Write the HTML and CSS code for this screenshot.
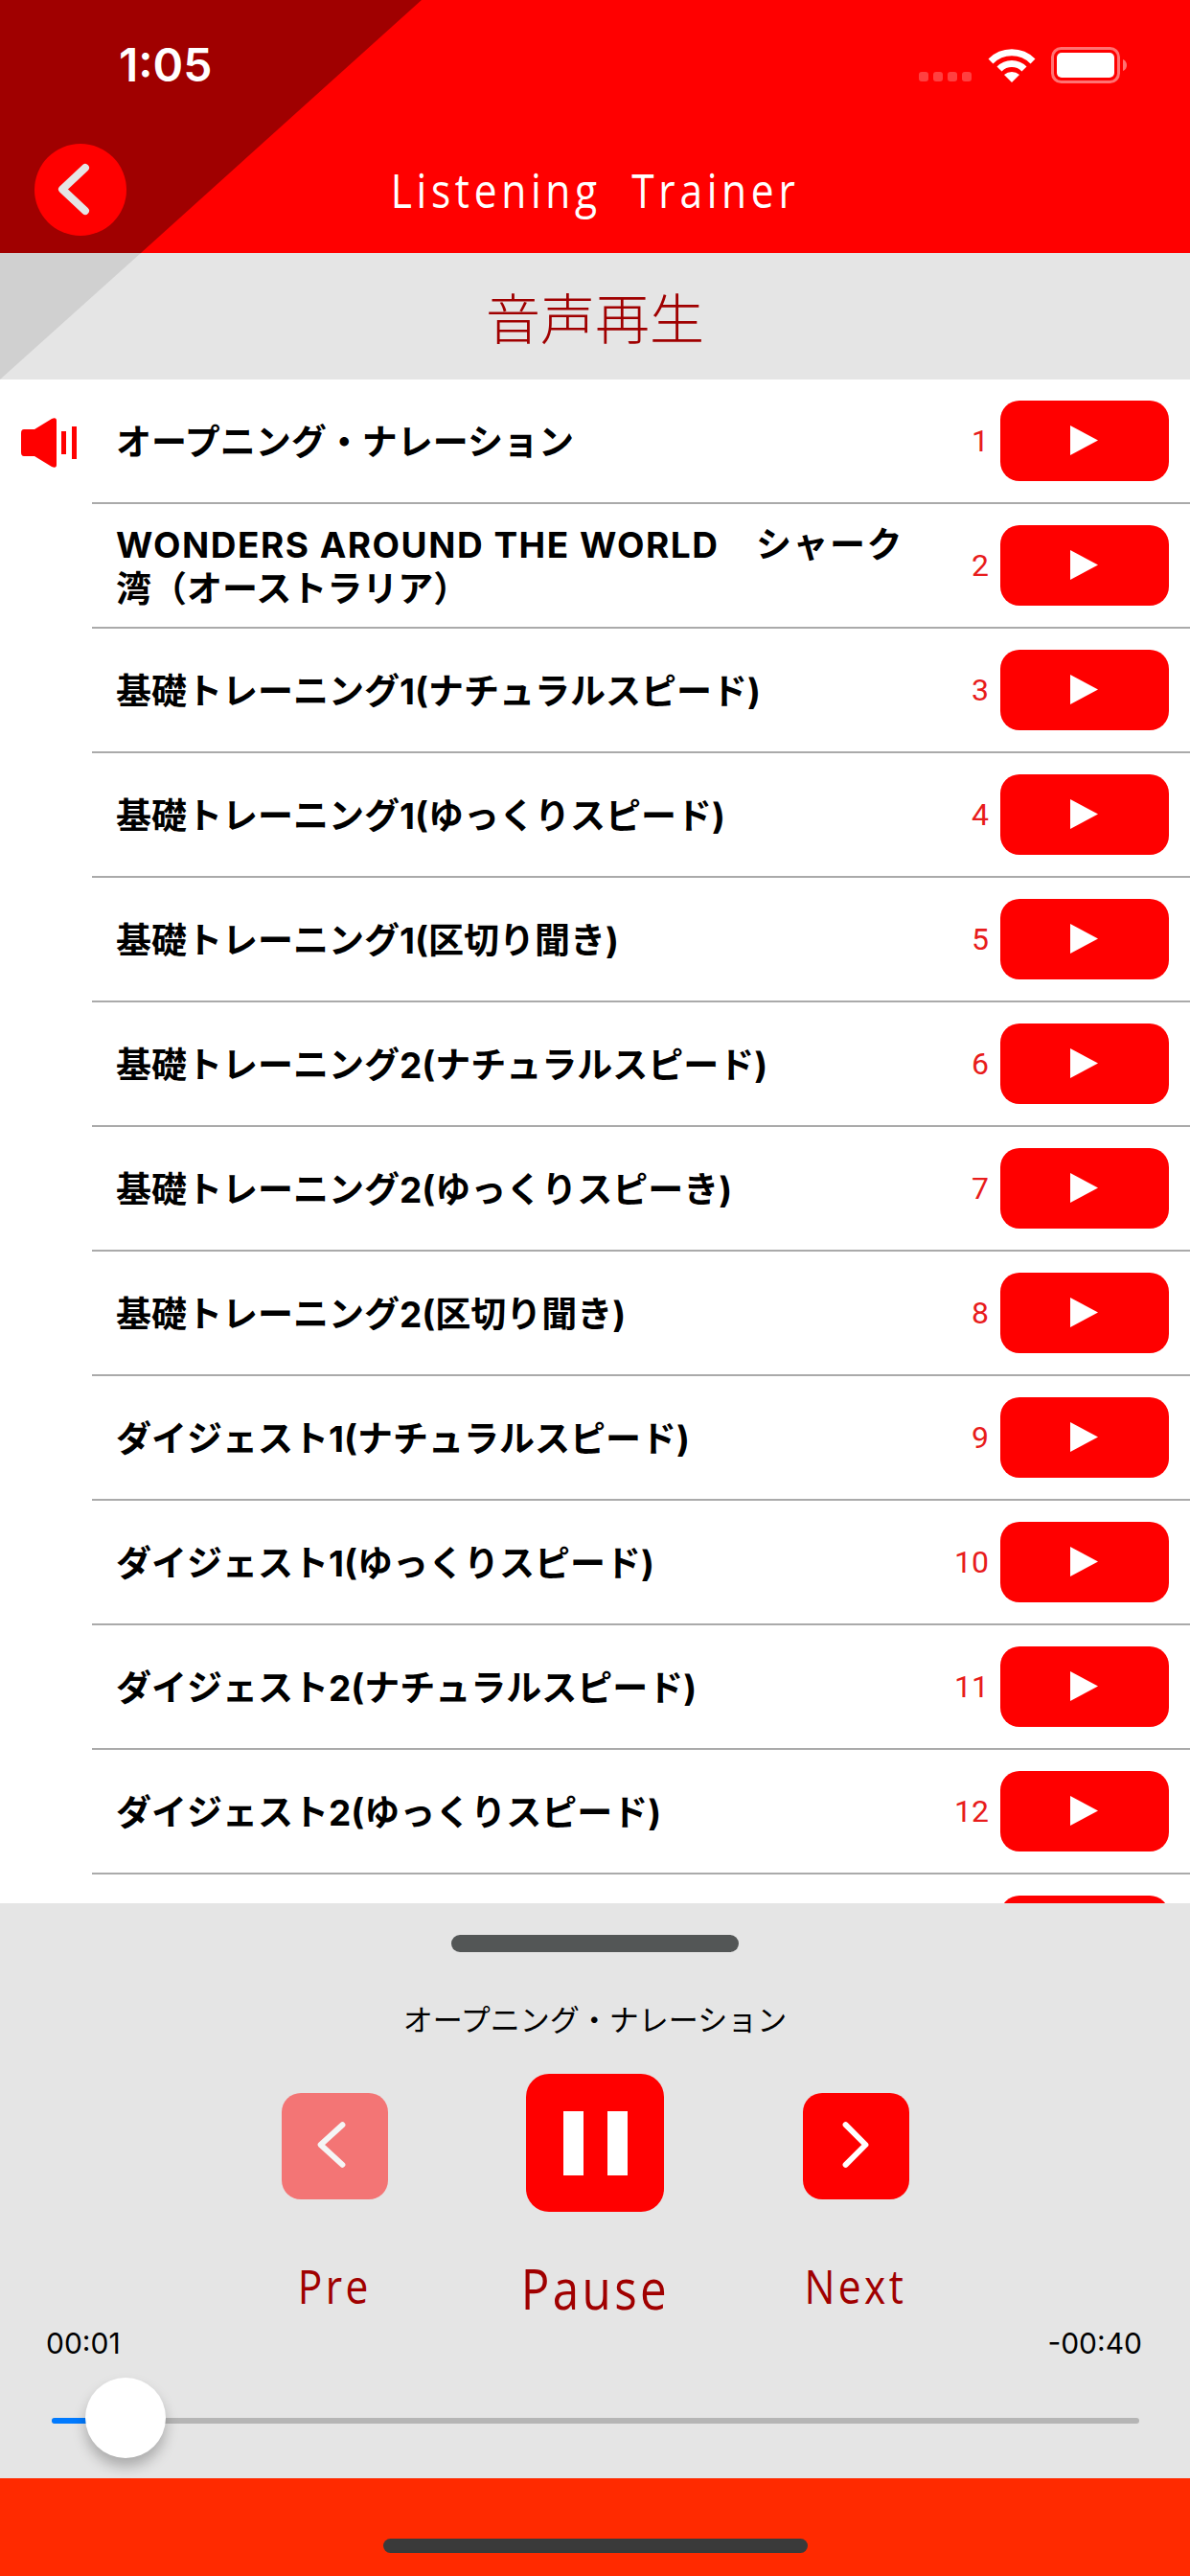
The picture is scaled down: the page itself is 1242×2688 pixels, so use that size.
FILE: index.html
```html
<!DOCTYPE html>
<html lang="ja">
<head>
  <meta charset="UTF-8" />
  <meta name="viewport" content="width=device-width, initial-scale=1.0"/>
  <title>Listening Trainer</title>
  <link rel="stylesheet" href="styles.css">
</head>
<body>
  <div class="screen">

    <header class="app-header">
      <div class="status-bar">
        <span class="time">1:05</span>
        <div class="status-icons">
          <div class="signal"><i></i><i></i><i></i><i></i></div>
          <svg class="wifi" viewBox="0 0 50 36" width="50" height="36">
            <path d="M3 14 A31 31 0 0 1 47 14" fill="none" stroke="#fff" stroke-width="7"/>
            <path d="M12 22 A18 18 0 0 1 38 22" fill="none" stroke="#fff" stroke-width="7"/>
            <path d="M25 36 L17 28 A12 12 0 0 1 33 28 Z" fill="#fff"/>
          </svg>
          <svg class="battery" viewBox="0 0 80 38" width="80" height="38">
            <rect x="1.5" y="1.5" width="69" height="35" rx="9" fill="none" stroke="#fff" stroke-opacity="0.45" stroke-width="3"/>
            <rect x="6" y="6" width="60" height="26" rx="5" fill="#fff"/>
            <path d="M75 13 C78 14 79 17 79 19 C79 21 78 24 75 25 Z" fill="#fff" fill-opacity="0.45"/>
          </svg>
        </div>
      </div>
      <div class="nav-row">
        <button class="back-btn">
          <svg viewBox="0 0 96 96" width="96" height="96">
            <path d="M53 25 L29 47.500 L53 70" fill="none" stroke="#e5e5e5" stroke-width="8" stroke-linecap="round" stroke-linejoin="round"/>
          </svg>
        </button>
        <div class="app-title"><span>Listening&nbsp; Trainer</span></div>
      </div>
    </header>

    <div class="page-title">音声再生</div>

    <main class="track-list">
      <div class="track">
        <div class="gutter">
          <svg viewBox="0 0 60 52" width="60" height="52">
            <path d="M3 12 H14 L32 1 Q37 -1 37 3 V49 Q37 53 32 51 L14 40 H3 Q0 40 0 36 V16 Q0 12 3 12 Z" fill="#f00"/>
            <rect x="42" y="14" width="5" height="24" fill="#f00"/>
            <rect x="53" y="9" width="5" height="34" fill="#f00"/>
          </svg>
        </div>
        <div class="track-main">
          <div class="track-name">オープニング・ナレーション</div>
          <div class="track-num">1</div>
          <button class="play-btn"></button>
        </div>
      </div>
      <div class="track">
        <div class="gutter"></div>
        <div class="track-main">
          <div class="track-name">
            <div class="latin">WONDERS AROUND THE WORLD　シャーク</div>
            <div>湾（オーストラリア）</div>
          </div>
          <div class="track-num">2</div>
          <button class="play-btn"></button>
        </div>
      </div>
      <div class="track">
        <div class="gutter"></div>
        <div class="track-main">
          <div class="track-name">基礎トレーニング1(ナチュラルスピード)</div>
          <div class="track-num">3</div>
          <button class="play-btn"></button>
        </div>
      </div>
      <div class="track">
        <div class="gutter"></div>
        <div class="track-main">
          <div class="track-name">基礎トレーニング1(ゆっくりスピード)</div>
          <div class="track-num">4</div>
          <button class="play-btn"></button>
        </div>
      </div>
      <div class="track">
        <div class="gutter"></div>
        <div class="track-main">
          <div class="track-name">基礎トレーニング1(区切り聞き)</div>
          <div class="track-num">5</div>
          <button class="play-btn"></button>
        </div>
      </div>
      <div class="track">
        <div class="gutter"></div>
        <div class="track-main">
          <div class="track-name">基礎トレーニング2(ナチュラルスピード)</div>
          <div class="track-num">6</div>
          <button class="play-btn"></button>
        </div>
      </div>
      <div class="track">
        <div class="gutter"></div>
        <div class="track-main">
          <div class="track-name">基礎トレーニング2(ゆっくりスピーき)</div>
          <div class="track-num">7</div>
          <button class="play-btn"></button>
        </div>
      </div>
      <div class="track">
        <div class="gutter"></div>
        <div class="track-main">
          <div class="track-name">基礎トレーニング2(区切り聞き)</div>
          <div class="track-num">8</div>
          <button class="play-btn"></button>
        </div>
      </div>
      <div class="track">
        <div class="gutter"></div>
        <div class="track-main">
          <div class="track-name">ダイジェスト1(ナチュラルスピード)</div>
          <div class="track-num">9</div>
          <button class="play-btn"></button>
        </div>
      </div>
      <div class="track">
        <div class="gutter"></div>
        <div class="track-main">
          <div class="track-name">ダイジェスト1(ゆっくりスピード)</div>
          <div class="track-num">10</div>
          <button class="play-btn"></button>
        </div>
      </div>
      <div class="track">
        <div class="gutter"></div>
        <div class="track-main">
          <div class="track-name">ダイジェスト2(ナチュラルスピード)</div>
          <div class="track-num">11</div>
          <button class="play-btn"></button>
        </div>
      </div>
      <div class="track">
        <div class="gutter"></div>
        <div class="track-main">
          <div class="track-name">ダイジェスト2(ゆっくりスピード)</div>
          <div class="track-num">12</div>
          <button class="play-btn"></button>
        </div>
      </div>
      <div class="track">
        <div class="gutter"></div>
        <div class="track-main">
          <div class="track-name"></div>
          <div class="track-num"></div>
          <button class="play-btn"></button>
        </div>
      </div>
    </main>

    <section class="player">
      <div class="handle"></div>
      <div class="now-playing">オープニング・ナレーション</div>

      <div class="controls">
        <div class="ctrl">
          <button class="ctrl-btn small faded">
            <svg viewBox="0 0 112 112" width="112" height="112">
              <path d="M64 33 L41 54 L64 75" fill="none" stroke="#f5f5f5" stroke-width="6" stroke-linecap="round" stroke-linejoin="round"/>
            </svg>
          </button>
          <div class="ctrl-label"><span>Pre</span></div>
        </div>
        <div class="ctrl">
          <button class="ctrl-btn big">
            <i class="pause-bar"></i><i class="pause-bar"></i>
          </button>
          <div class="ctrl-label big"><span>Pause</span></div>
        </div>
        <div class="ctrl">
          <button class="ctrl-btn small">
            <svg viewBox="0 0 112 112" width="112" height="112">
              <path d="M45 33 L66 54 L45 75" fill="none" stroke="#fff" stroke-width="6" stroke-linecap="round" stroke-linejoin="round"/>
            </svg>
          </button>
          <div class="ctrl-label"><span>Next</span></div>
        </div>
      </div>

      <div class="times">
        <span>00:01</span>
        <span>-00:40</span>
      </div>

      <div class="slider">
        <div class="slider-fill"></div>
        <div class="slider-thumb"></div>
      </div>
    </section>

    <footer class="home-area">
      <div class="home-bar"></div>
    </footer>

  </div>
</body>
</html>
```

FILE: styles.css
```css
* {
  margin: 0;
  padding: 0;
  box-sizing: border-box;
}

html, body {
  height: 100%;
}

body {
  background-color: #fff;
  font-family: Inter, "Noto Sans CJK JP", sans-serif;
  color: #000;
}

button {
  border: none;
  display: block;
}

.screen {
  width: 1242px;
  height: 2688px;
  display: flex;
  flex-direction: column;
  overflow: hidden;
}

/* header */

.app-header {
  position: relative;
  height: 264px;
  flex-shrink: 0;
  background-color: #f00;
  color: #fff;
}

.app-header::before {
  content: "";
  position: absolute;
  inset: 0;
  background-color: #a00000;
  clip-path: polygon(0 0, 440px 0, 147px 264px, 0 264px);
}

.status-bar {
  position: relative;
  height: 150px;
  display: flex;
  justify-content: space-between;
  padding: 40px 65px 0 124px;
}

.time {
  font-size: 48px;
  font-weight: 600;
  line-height: 56px;
}

.status-icons {
  display: flex;
  align-items: flex-start;
  padding-top: 10px;
}

.signal {
  display: flex;
  gap: 5px;
  margin-top: 25px;
  margin-right: 17px;
}

.signal i {
  width: 10px;
  height: 10px;
  border-radius: 3px;
  background-color: rgba(255,255,255,0.25);
}

.wifi {
  margin-right: 16px;
}

.battery {
  margin-top: -1px;
}

.nav-row {
  position: relative;
  display: grid;
  grid-template-columns: 96px 1fr 96px;
  align-items: center;
  padding: 0 36px;
  height: 96px;
}

.back-btn {
  width: 96px;
  height: 96px;
  border-radius: 50%;
  background-color: #f00;
}

.app-title {
  text-align: center;
  font-family: "Open Sans", sans-serif;
  font-size: 50px;
  font-weight: 400;
  line-height: 60px;
}

.app-title span {
  display: inline-block;
  transform: scaleX(0.85);
  letter-spacing: 5.500px;
  white-space: nowrap;
}

.page-title {
  position: relative;
  height: 132px;
  flex-shrink: 0;
  background-color: #e5e5e5;
  color: #a00000;
  font-family: "Noto Sans CJK JP", sans-serif;
  font-size: 57px;
  font-weight: 300;
  line-height: 130px;
  text-align: center;
}

.page-title::before {
  content: "";
  position: absolute;
  inset: 0;
  background-color: #d0d0d0;
  clip-path: polygon(0 0, 147px 0, 0 132px);
}

/* list */

.track-list {
  flex: 1;
  overflow: hidden;
  background-color: #fff;
}

.track {
  display: flex;
  height: 130px;
}

.gutter {
  width: 96px;
  flex-shrink: 0;
  padding: 40px 0 0 22px;
}

.gutter svg {
  display: block;
}

.track-main {
  flex: 1;
  display: flex;
  align-items: center;
  padding: 0 22px 0 25px;
  border-bottom: 2px solid #aaa;
}

.track-name {
  flex: 1;
  font-size: 37px;
  font-weight: 700;
  line-height: 46px;
  padding-top: 3px;
}

.latin {
  letter-spacing: 1.500px;
}

.track-num {
  font-family: Roboto, sans-serif;
  font-size: 32px;
  font-weight: 400;
  color: #e81c1c;
  margin-right: 12px;
}

.play-btn {
  position: relative;
  width: 176px;
  height: 84px;
  flex-shrink: 0;
  border-radius: 20px;
  background-color: #f00;
}

.play-btn::after {
  content: "";
  position: absolute;
  left: 73px;
  top: 26px;
  width: 29px;
  height: 31px;
  background-color: #fff;
  clip-path: polygon(0 0, 100% 50%, 0 100%);
}

/* player */

.player {
  height: 600px;
  flex-shrink: 0;
  background-color: #e5e5e5;
  padding-top: 33px;
}

.handle {
  width: 300px;
  height: 18px;
  margin: 0 auto;
  border-radius: 9px;
  background-color: #535656;
}

.now-playing {
  margin-top: 49px;
  text-align: center;
  font-family: "Noto Sans CJK JP", sans-serif;
  font-size: 31px;
  line-height: 40px;
}

.controls {
  display: flex;
  justify-content: center;
  margin-top: 38px;
}

.ctrl {
  width: 272px;
  height: 261px;
  display: flex;
  flex-direction: column;
  align-items: center;
}

.ctrl-btn {
  display: flex;
  justify-content: center;
  align-items: center;
  background-color: #f00;
}

.ctrl-btn.small {
  width: 111px;
  height: 111px;
  margin-top: 20px;
  border-radius: 20px;
}

.ctrl-btn.big {
  width: 144px;
  height: 144px;
  gap: 25px;
  border-radius: 24px;
}

.ctrl-btn.faded {
  background-color: #f37575;
}

.pause-bar {
  width: 21px;
  height: 67px;
  background-color: #fff;
}

.ctrl-label {
  margin-top: 60px;
  color: #a00000;
  font-family: "Open Sans", sans-serif;
  font-size: 50px;
  line-height: 60px;
}

.ctrl-label.big {
  margin-top: 45px;
  font-size: 58px;
  line-height: 70px;
}

.ctrl-label span {
  display: inline-block;
  transform: scaleX(0.85);
  letter-spacing: 4px;
}

.times {
  display: flex;
  justify-content: space-between;
  padding: 0 50px 0 48px;
  font-size: 30px;
  line-height: 40px;
}

.slider {
  position: relative;
  height: 6px;
  margin: 58px 53px 0 54px;
  border-radius: 3px;
  background-color: #b5b5b5;
}

.slider-fill {
  width: 60px;
  height: 6px;
  border-radius: 3px;
  background-color: #007aff;
}

.slider-thumb {
  position: absolute;
  left: 35px;
  top: -42px;
  width: 84px;
  height: 84px;
  border-radius: 50%;
  background-color: #fff;
  box-shadow: 0 9px 14px rgba(0,0,0,0.25);
}

/* home indicator */

.home-area {
  height: 102px;
  flex-shrink: 0;
  background-color: #ff2a00;
  padding-top: 63px;
}

.home-bar {
  width: 443px;
  height: 15px;
  margin: 0 auto;
  border-radius: 8px;
  background-color: #3a3a3a;
}
```
